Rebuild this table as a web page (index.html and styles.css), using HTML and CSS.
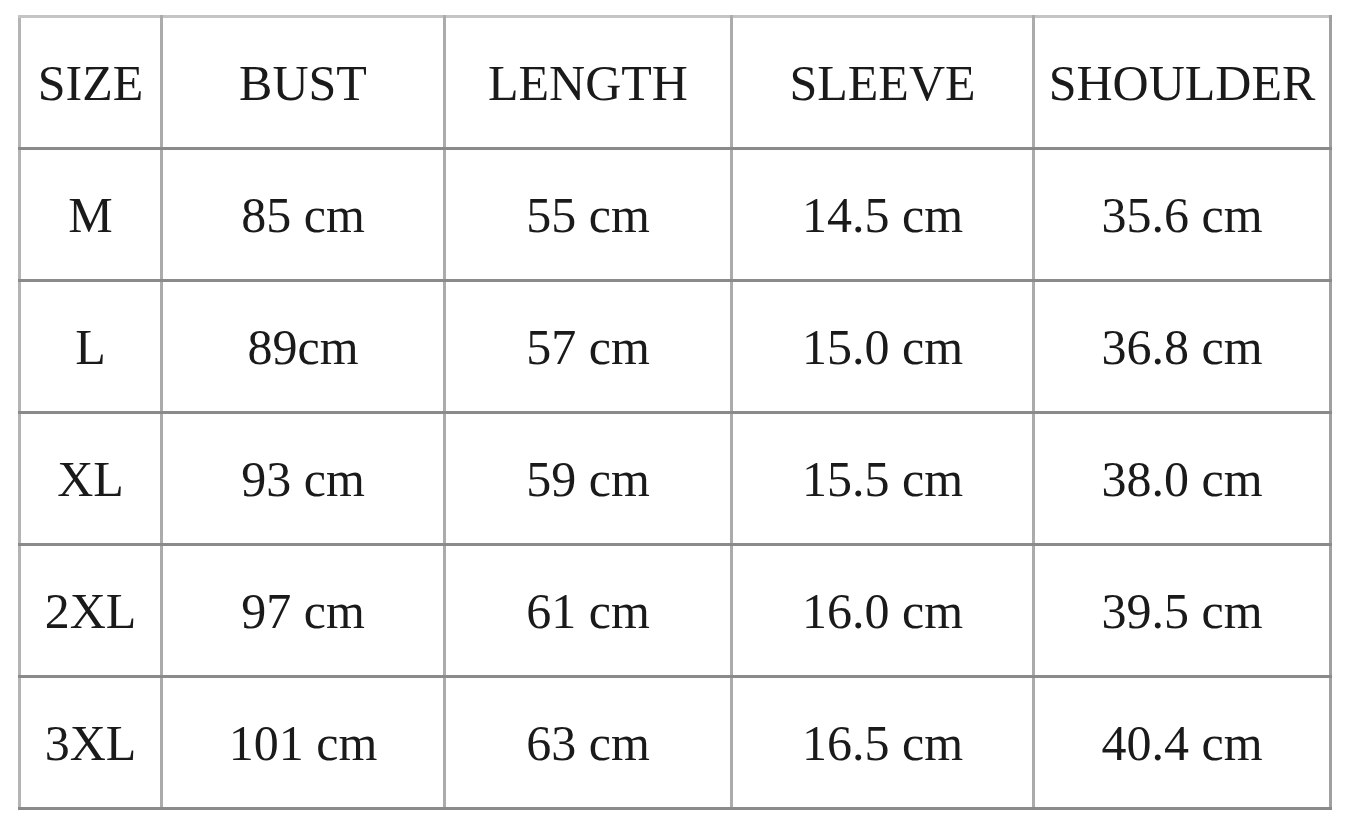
FILE: index.html
```html
<!DOCTYPE html>
<html>
<head>
<meta charset="utf-8">
<link rel="stylesheet" href="styles.css">
</head>
<body>
<div class="page">
<table class="size-table">
<colgroup>
<col class="c-size"><col class="c-bust"><col class="c-length"><col class="c-sleeve"><col class="c-shoulder">
</colgroup>
<tr><td>SIZE</td><td>BUST</td><td>LENGTH</td><td>SLEEVE</td><td>SHOULDER</td></tr>
<tr><td>M</td><td>85 cm</td><td>55 cm</td><td>14.5 cm</td><td>35.6 cm</td></tr>
<tr><td>L</td><td>89cm</td><td>57 cm</td><td>15.0 cm</td><td>36.8 cm</td></tr>
<tr><td>XL</td><td>93 cm</td><td>59 cm</td><td>15.5 cm</td><td>38.0 cm</td></tr>
<tr><td>2XL</td><td>97 cm</td><td>61 cm</td><td>16.0 cm</td><td>39.5 cm</td></tr>
<tr><td>3XL</td><td>101 cm</td><td>63 cm</td><td>16.5 cm</td><td>40.4 cm</td></tr>
</table>
</div>
</body>
</html>
```
FILE: styles.css
```css
html, body {
  margin: 0;
  padding: 0;
  background: #ffffff;
}
.page {
  padding: 15px 0 0 18px;
}
.size-table {
  border-collapse: collapse;
  table-layout: fixed;
  width: 1311px;
  font-family: "Liberation Serif", "Times New Roman", serif;
  font-size: 50px;
  color: #1a1a1a;
}
.c-size { width: 142px; }
.c-bust { width: 283px; }
.c-length { width: 287px; }
.c-sleeve { width: 302px; }
.c-shoulder { width: 297px; }
.size-table tr {
  height: 132px;
}
.size-table td {
  text-align: center;
  vertical-align: middle;
  padding: 0;
  border-left: 3px solid #ababab;
  border-right: 3px solid #ababab;
  border-top: 3px solid #8a8a8a;
  border-bottom: 3px solid #8a8a8a;
  white-space: nowrap;
}
.size-table tr:first-child td {
  border-top-color: #c4c4c4;
}
.size-table td:first-child {
  border-left-color: #b4b4b4;
}
.size-table td:last-child {
  border-right-color: #a0a0a0;
}
```
